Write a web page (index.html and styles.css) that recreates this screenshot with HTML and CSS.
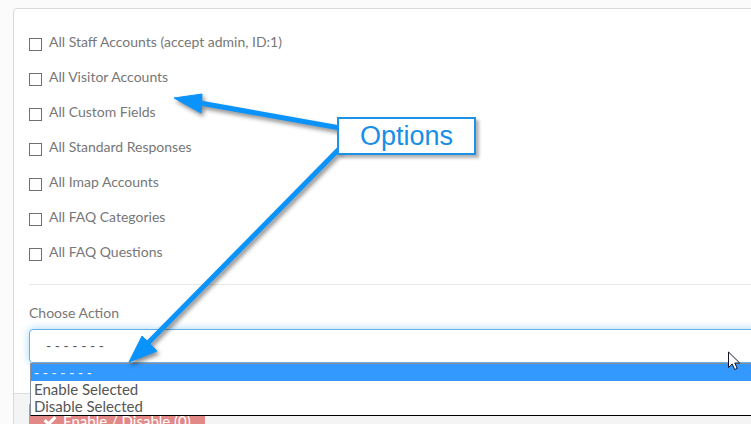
FILE: index.html
```html
<!DOCTYPE html>
<html lang="en">
<head>
<meta charset="utf-8">
<title>Enable / Disable</title>
<link rel="stylesheet" href="styles.css">
</head>
<body>
<form class="panel">
  <div class="panel-body">
    <div class="checks">
      <label class="check"><input type="checkbox"><span>All Staff Accounts (accept admin, ID:1)</span></label>
      <label class="check"><input type="checkbox"><span>All Visitor Accounts</span></label>
      <label class="check"><input type="checkbox"><span>All Custom Fields</span></label>
      <label class="check"><input type="checkbox"><span>All Standard Responses</span></label>
      <label class="check"><input type="checkbox"><span>All Imap Accounts</span></label>
      <label class="check"><input type="checkbox"><span>All FAQ Categories</span></label>
      <label class="check"><input type="checkbox"><span>All FAQ Questions</span></label>
    </div>
    <hr class="rule">
    <label class="field-label" for="action">Choose Action</label>
    <div class="field">
      <select class="select" id="action">
        <option>- - - - - - -</option>
        <option>Enable Selected</option>
        <option>Disable Selected</option>
      </select>
      <ul class="menu" role="listbox" aria-label="Choose Action">
        <li class="menu-item active" role="option" aria-selected="true">- - - - - - -</li>
        <li class="menu-item" role="option">Enable Selected</li>
        <li class="menu-item" role="option">Disable Selected</li>
      </ul>
    </div>
  </div>
  <div class="panel-footer">
    <button class="submit" type="button">
      <svg width="14" height="12" viewBox="0 0 14 12" aria-hidden="true"><path d="M.5 6.200 2.700 4 5.500 6.800 11.300 1 13.500 3.200 5.500 11.200Z" fill="#fff"/></svg>
      <span>Enable / Disable (0)</span>
    </button>
  </div>
</form>
<svg class="arrows" width="751" height="424" viewBox="0 0 751 424" aria-hidden="true">
  <g fill="#0a93fb" stroke="#0a93fb">
    <path d="M200 103 340 128" stroke-width="5"/>
    <path d="M174 98 202 94 201 113Z" stroke-width="1"/>
    <path d="M147 344 342 146" stroke-width="5"/>
    <path d="M129 362 142 336 157 351Z" stroke-width="1"/>
  </g>
</svg>
<div class="callout">Options</div>
<svg class="cursor" width="13" height="21" viewBox="0 0 13 21" aria-hidden="true"><path d="M.5 1V16.500L4.200 13 6.700 18.500 9.200 17.400 6.800 12H11.700Z" fill="#fff" stroke="#14142c"/></svg>
</body>
</html>
```
FILE: styles.css
```css
* { box-sizing: border-box; }

body {
  margin: 0;
  padding: 8px 0 0 13px;
  height: 100vh;
  overflow: hidden;
  background: #fbfbfb;
  color: #777;
  font: 14px/18px Lato, "Open Sans", sans-serif;
}

.panel {
  margin-right: -32px;
  background: #fff;
  border: 1px solid #d9d9d9;
  border-radius: 4px;
}

.panel-body { padding: 24px 15px 30px; }

.checks {
  display: flex;
  flex-direction: column;
  gap: 17px;
}

.check {
  display: flex;
  gap: 7px;
}

.check input {
  appearance: none;
  width: 13px;
  height: 13px;
  margin: 5px 0 0;
  border: 1px solid #707070;
  background: #fff;
}

.rule {
  margin: 23px 0 19px;
  border: 0;
  border-top: 1px solid #e8e8e8;
}

.field-label {
  display: block;
  margin-bottom: 7px;
}

.field { position: relative; }

.select {
  display: block;
  appearance: none;
  width: 100%;
  height: 34px;
  padding: 0 16px;
  border: 1px solid #66afe9;
  border-radius: 4px;
  outline: 0;
  background: #fff;
  box-shadow: 0 0 8px rgba(102, 190, 240, .6);
  color: #555;
  font: 14px/18px Lato, sans-serif;
}

.menu {
  position: absolute;
  top: 34px;
  left: 1px;
  right: 0;
  margin: 0;
  padding: 0;
  list-style: none;
  background: #fff;
  border: 1px solid #8a9098;
  border-bottom-color: #000;
  color: #555;
  font-size: 15px;
  line-height: 17px;
}

.menu-item { padding: 0 3px; }

.active {
  background: #3399ff;
  color: #fff;
  font-size: 14px;
}

.panel-footer {
  padding: 10px 15px;
  background: #f4f4f4;
  border-top: 1px solid #ddd;
}

.submit {
  display: flex;
  align-items: center;
  gap: 6px;
  height: 34px;
  padding: 0 14px;
  border: 0;
  background: #e28886;
  color: #fff;
  font: 15px/18px Lato, sans-serif;
}

.arrows {
  position: absolute;
  top: 0;
  left: 0;
  filter: drop-shadow(2px 3px 2px rgba(0, 0, 0, .45));
  pointer-events: none;
}

.callout {
  position: absolute;
  top: 117px;
  left: 337px;
  width: 139px;
  border: 2px solid #1b91e8;
  background: #fff;
  box-shadow: 3px 3px 3px rgba(0, 0, 0, .3);
  color: #178fe8;
  font: 27px/34px "Liberation Sans", Arial, sans-serif;
  text-align: center;
}

.cursor {
  position: absolute;
  top: 351px;
  left: 728px;
}
```
